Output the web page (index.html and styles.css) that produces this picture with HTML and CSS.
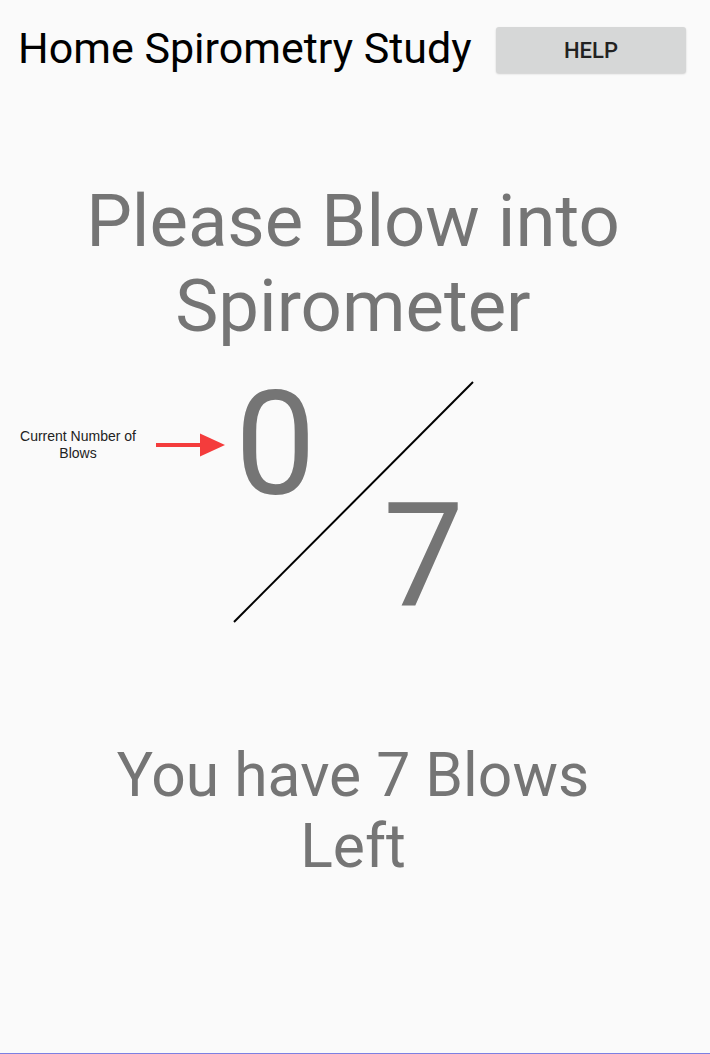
FILE: index.html
```html
<!DOCTYPE html>
<html>
<head>
<meta charset="utf-8">
<link rel="stylesheet" href="styles.css">
</head>
<body>
<div class="screen">
  <header class="appbar">
    <h1 class="title">Home Spirometry Study</h1>
    <button class="help">HELP</button>
  </header>
  <h2 class="prompt">Please Blow into<br>Spirometer</h2>
  <div class="counter-row">
    <div class="label">Current Number of<br>Blows</div>
    <svg class="arrow" width="70" height="24" viewBox="0 0 70 24">
      <rect x="0" y="10" width="46" height="4" fill="#f43c3c"/>
      <polygon points="44,0.5 69,12 44,23.5" fill="#f43c3c"/>
    </svg>
    <div class="fraction">
      <span class="num current">0</span>
      <span class="num total">7</span>
      <svg class="slash" width="242" height="242" viewBox="0 0 242 242">
        <line x1="240" y1="1" x2="1" y2="241" stroke="#000" stroke-width="2"/>
      </svg>
    </div>
  </div>
  <p class="remaining">You have 7 Blows<br>Left</p>
</div>
</body>
</html>
```
FILE: styles.css
```css
html, body {
  margin: 0;
  padding: 0;
  background: #fafafa;
}
.screen {
  width: 710px;
  height: 1053px;
  border-bottom: 1px solid #7c80e2;
  display: flex;
  flex-direction: column;
  font-family: Roboto, "Liberation Sans", sans-serif;
  overflow: hidden;
}
.appbar {
  display: flex;
  align-items: flex-start;
  padding: 23px 24px 0 18px;
}
.title {
  margin: 0;
  font-size: 43px;
  font-weight: 400;
  line-height: 50px;
  color: #000;
}
.help {
  margin-left: auto;
  margin-top: 4px;
  width: 190px;
  height: 46px;
  background: #d6d7d7;
  border: none;
  border-radius: 3px;
  box-shadow: 0 1px 2px rgba(0,0,0,0.18);
  font-family: Roboto, sans-serif;
  font-size: 22px;
  font-weight: 500;
  color: #222;
  padding: 0;
}
.prompt {
  margin: 106px 0 0 0;
  padding-right: 4px;
  font-size: 72.5px;
  font-weight: 400;
  line-height: 85px;
  text-align: center;
  color: #757575;
}
.counter-row {
  display: flex;
  align-items: flex-start;
  margin-top: 32px;
}
.label {
  width: 156px;
  margin-top: 47px;
  font-family: "Liberation Sans", Arial, sans-serif;
  font-size: 14px;
  line-height: 17px;
  text-align: center;
  color: #222;
}
.arrow {
  margin-top: 52px;
  display: block;
}
.fraction {
  position: relative;
  margin-left: 7px;
  width: 242px;
  height: 242px;
  display: grid;
  grid-template-columns: 150px auto;
  grid-template-rows: 100px 100px;
  row-gap: 11px;
  padding-top: 14px;
  box-sizing: border-box;
}
.num {
  font-size: 144px;
  line-height: 100px;
  color: #757575;
}
.current {
  grid-column: 1;
  grid-row: 1;
  padding-left: 2px;
}
.total {
  grid-column: 2;
  grid-row: 2;
}
.slash {
  position: absolute;
  left: 0;
  top: 0;
}
.remaining {
  margin: 117px 0 0 0;
  padding-right: 4px;
  font-size: 60.6px;
  line-height: 71px;
  text-align: center;
  color: #757575;
}
```
